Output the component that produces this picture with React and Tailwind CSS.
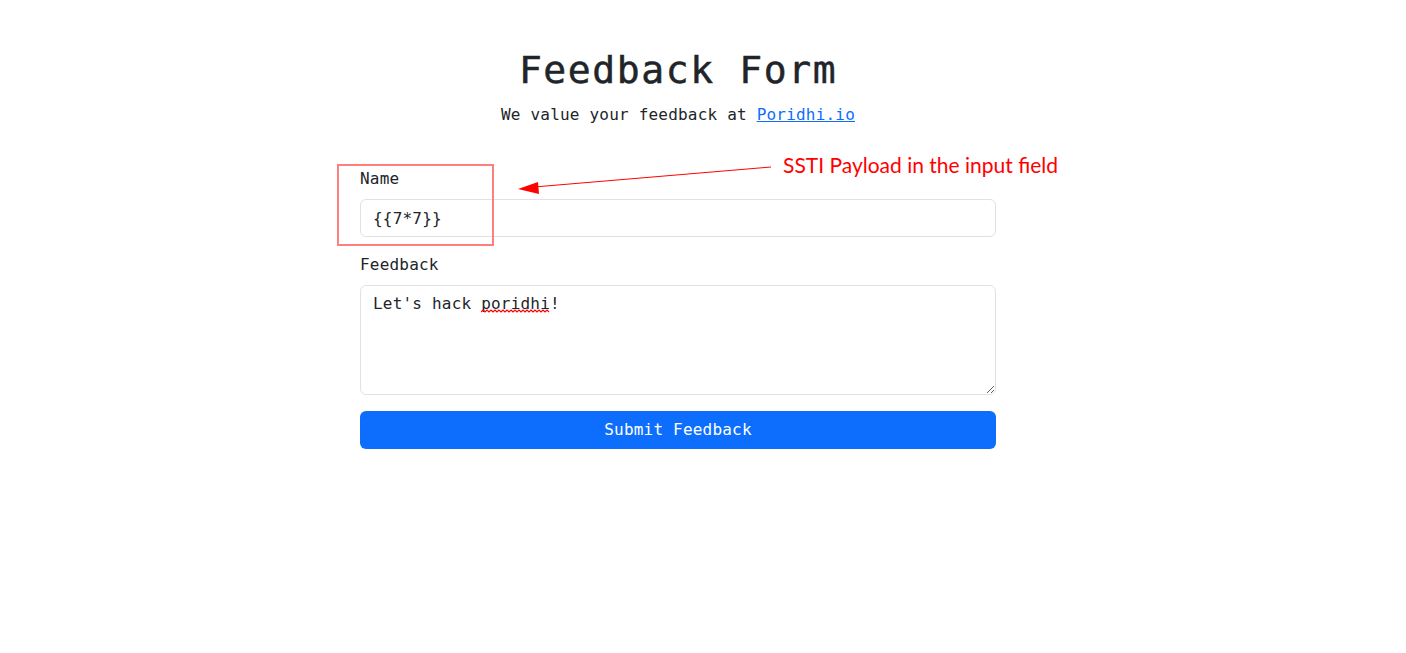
const mono = { fontFamily: '"DejaVu Sans Mono", "Liberation Mono", monospace' };

const App = () => {
    return (
        <div className="min-h-screen bg-white text-[#212529] tracking-[0.2px]" style={mono}>
            <div className="relative ml-[360px] w-[636px] pt-[46px]">
                <h1 className="text-center text-[38px] leading-[48px] tracking-[1.6px] font-normal [-webkit-text-stroke:0.5px_#212529] mb-[9px]">
                    Feedback Form
                </h1>
                <p className="text-center text-base leading-6 mb-10">
                    We value your feedback at{" "}
                    <a href="#" className="text-[#0d6efd] underline">
                        Poridhi.io
                    </a>
                </p>

                <form>
                    <div className="mb-4">
                        <label className="block text-base leading-6 mb-2">
                            Name
                        </label>
                        <input
                            type="text"
                            defaultValue="{{7*7}}"
                            className="block w-full h-[38px] px-3 py-1.5 text-base leading-6 border border-[#dee2e6] rounded-md outline-none"
                        />
                    </div>

                    <div className="mb-4">
                        <label className="block text-base leading-6 mb-2">
                            Feedback
                        </label>
                        <div className="relative">
                            <textarea
                                rows={4}
                                spellCheck={false}
                                defaultValue="Let's hack poridhi!"
                                className="block w-full h-[110px] px-3 py-1.5 text-base leading-6 border border-[#dee2e6] rounded-md outline-none"
                            />
                            <svg
                                className="absolute left-[121px] top-[24px]"
                                width="70"
                                height="4"
                                viewBox="0 0 70 4"
                            >
                                <path
                                    d="M0 3 L2 1 L4 3 L6 1 L8 3 L10 1 L12 3 L14 1 L16 3 L18 1 L20 3 L22 1 L24 3 L26 1 L28 3 L30 1 L32 3 L34 1 L36 3 L38 1 L40 3 L42 1 L44 3 L46 1 L48 3 L50 1 L52 3 L54 1 L56 3 L58 1 L60 3 L62 1 L64 3 L66 1 L68 3"
                                    fill="none"
                                    stroke="#ff0000"
                                    strokeWidth="1.2"
                                />
                            </svg>
                        </div>
                    </div>

                    <button
                        type="button"
                        className="block w-full h-[38px] bg-[#0d6efd] text-white text-base leading-6 rounded-md"
                    >
                        Submit Feedback
                    </button>
                </form>

                {/* annotation */}
                <div className="absolute left-[-23px] top-[164px] w-[157px] h-[82px] border-2 border-[#ff7f7f]" />
                <svg
                    className="absolute left-[150px] top-[160px]"
                    width="270"
                    height="40"
                    viewBox="0 0 270 40"
                >
                    <line x1="261" y1="7" x2="24" y2="27" stroke="#ff0000" strokeWidth="1" />
                    <polygon points="8,29 28,22 29,34" fill="#ff0000" />
                </svg>
                <div
                    className="absolute left-[423px] top-[149px] whitespace-nowrap text-[21px] leading-8 tracking-normal text-[#ff0000]"
                    style={{ fontFamily: 'Lato, "Noto Sans", sans-serif' }}
                >
                    SSTI Payload in the input field
                </div>
            </div>
        </div>
    );
};

export default App;
